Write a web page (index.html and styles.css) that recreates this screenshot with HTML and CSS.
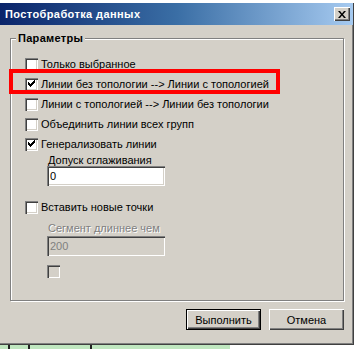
FILE: index.html
```html
<!DOCTYPE html>
<html lang="ru">
<head>
<meta charset="utf-8">
<title>Постобработка данных</title>
<link rel="stylesheet" href="styles.css">
</head>
<body>
<div class="screen">
  <div class="top-strip"></div>
  <div class="window">
    <div class="titlebar">
      <span class="title">Постобработка данных</span>
      <span class="close">
        <svg width="8" height="7" viewBox="0 0 8 7"><path d="M0 0h2l2 2.5L6 0h2L5 3.5 8 7H6L4 4.5 2 7H0l3-3.5z" fill="#000"/></svg>
      </span>
    </div>
    <div class="client">
      <div class="group">
        <span class="legend">Параметры</span>
        <div class="row"><span class="cb"></span><span class="lbl">Только выбранное</span></div>
        <div class="row marked"><span class="cb checked"></span><span class="lbl">Линии без топологии --&gt; Линии с топологией</span></div>
        <div class="row"><span class="cb"></span><span class="lbl">Линии с топологией --&gt; Линии без топологии</span></div>
        <div class="row"><span class="cb"></span><span class="lbl">Объединить линии всех групп</span></div>
        <div class="row"><span class="cb checked"></span><span class="lbl">Генерализовать линии</span></div>
        <div class="sub">
          <div class="field-label">Допуск сглаживания</div>
          <div class="input">0</div>
        </div>
        <div class="row row-insert"><span class="cb"></span><span class="lbl">Вставить новые точки</span></div>
        <div class="sub">
          <div class="field-label disabled second">Сегмент длиннее чем</div>
          <div class="input disabled">200</div>
          <span class="cb cb-disabled"></span>
        </div>
      </div>
      <div class="buttons">
        <span class="btn default">Выполнить</span>
        <span class="btn">Отмена</span>
      </div>
    </div>
  </div>
  <div class="bottom-strip"><span class="mark m1"></span><span class="mark m2"></span><span class="mark m3"></span></div>
</div>
</body>
</html>
```

FILE: styles.css
```css
*, *::before, *::after { box-sizing: border-box; }
html, body { margin: 0; padding: 0; background: #fff; }
body {
  font-family: "Liberation Sans", Arial, sans-serif;
  font-size: 11px;
  color: #000;
}
.screen {
  width: 360px;
  height: 349px;
  overflow: hidden;
  display: flex;
  flex-direction: column;
}
.top-strip { height: 3px; background: #fff; flex: none; }
.window {
  width: 354px;
  height: 342px;
  flex: none;
  background: #d4d0c8;
  border-right: 1px solid #404040;
  border-bottom: 1px solid #404040;
  box-shadow: inset -1px -1px 0 #808080;
  display: flex;
  flex-direction: column;
}
.titlebar {
  height: 22px;
  flex: none;
  background: linear-gradient(to right, #0a246a 0%, #3a6ea5 50%, #a6caf0 100%);
  display: flex;
  align-items: center;
  padding: 0 3px 0 5px;
}
.title {
  color: #fff;
  font-weight: bold;
  font-size: 11px;
  letter-spacing: 0.4px;
  flex: 1;
}
.close {
  width: 16px;
  height: 14px;
  background: #d4d0c8;
  box-shadow: inset 1px 1px 0 #fff, inset -1px -1px 0 #404040, inset -2px -2px 0 #808080;
  display: flex;
  align-items: center;
  justify-content: center;
}
.client {
  flex: 1;
  padding: 13px 8px 0 10px;
  display: flex;
  flex-direction: column;
}
.group {
  position: relative;
  width: 334px;
  border: 1px solid #808080;
  box-shadow: 1px 1px 0 #fff, inset 1px 1px 0 #fff;
  padding: 15px 0 22px 14px;
}
.legend {
  position: absolute;
  left: 5px;
  top: -8px;
  padding: 0 2px;
  background: #d4d0c8;
  font-weight: bold;
  letter-spacing: 0.3px;
  line-height: 14px;
}
.row {
  height: 20px;
  display: flex;
  align-items: center;
  position: relative;
}
.lbl { margin-left: 3px; white-space: nowrap; }
.cb {
  width: 13px;
  height: 13px;
  flex: none;
  background: #fff;
  box-shadow: inset 1px 1px 0 #808080, inset 2px 2px 0 #404040, inset -1px -1px 0 #fff, inset -2px -2px 0 #d4d0c8;
  position: relative;
}
.cb.checked::after {
  content: "";
  position: absolute;
  left: 3px;
  top: 2px;
  width: 7px;
  height: 7px;
  background:
    linear-gradient(#000, #000) 0 2px / 1px 3px no-repeat,
    linear-gradient(#000, #000) 1px 3px / 1px 3px no-repeat,
    linear-gradient(#000, #000) 2px 4px / 1px 3px no-repeat,
    linear-gradient(#000, #000) 3px 3px / 1px 3px no-repeat,
    linear-gradient(#000, #000) 4px 2px / 1px 3px no-repeat,
    linear-gradient(#000, #000) 5px 1px / 1px 3px no-repeat,
    linear-gradient(#000, #000) 6px 0 / 1px 3px no-repeat;
}
.cb-disabled { background: #d4d0c8; display: block; margin-top: 9px; }
.marked::after {
  content: "";
  position: absolute;
  left: -16px;
  top: -5px;
  width: 271px;
  height: 25px;
  border: 4px solid #f00;
}
.sub {
  margin-left: 22px;
  display: flex;
  flex-direction: column;
  align-items: flex-start;
}
.field-label {
  line-height: 12px;
  margin-left: 1px;
  white-space: nowrap;
}
.field-label.second { margin-top: 5px; line-height: 13px; }
.disabled { color: #808080; }
.field-label.disabled { text-shadow: 1px 1px 0 #fff; }
.input {
  width: 118px;
  height: 20px;
  background: #fff;
  box-shadow: inset 1px 1px 0 #808080, inset 2px 2px 0 #404040, inset -1px -1px 0 #fff, inset -2px -2px 0 #d4d0c8;
  padding: 3px 3px 0 3px;
  line-height: 14px;
}
.input.disabled { background: #d4d0c8; margin-top: 1px; }
.row-insert { margin-top: 11px; }
.buttons {
  display: flex;
  justify-content: flex-end;
  gap: 8px;
  margin-top: 8px;
  padding-right: 1px;
}
.btn {
  width: 75px;
  height: 21px;
  display: flex;
  align-items: center;
  justify-content: center;
  background: #d4d0c8;
  box-shadow: inset 1px 1px 0 #fff, inset -1px -1px 0 #404040, inset -2px -2px 0 #808080;
}
.btn.default {
  border: 1px solid #000;
}
.bottom-strip {
  flex: none;
  height: 4px;
  background: linear-gradient(to right, #bfe6bf 0, #bfe6bf 230px, #fff 230px);
  display: flex;
}
.mark { height: 4px; width: 2px; background: #222; }
.m1 { margin-left: 8px; }
.m2 { margin-left: 18px; }
.m3 { margin-left: 60px; }
```
